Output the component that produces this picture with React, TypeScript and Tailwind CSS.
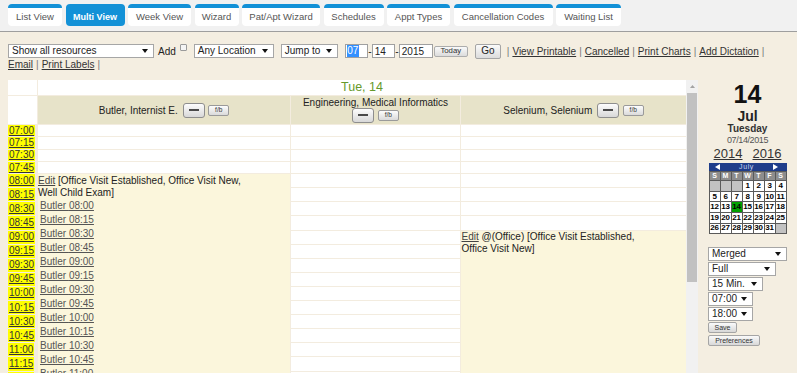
import React from "react";

function Tri() {
  return (
    <svg width="6" height="4" viewBox="0 0 6 4" className="shrink-0">
      <polygon points="0,0 6,0 3,4" fill="#111" />
    </svg>
  );
}

function Sel({ label, className }: { label: string; className: string }) {
  return (
    <div
      className={`flex items-center justify-between h-[14px] bg-white border border-[#a6a6a6] pl-[3px] pr-[5px] text-[10px] leading-none text-[#222] ${className}`}
    >
      <span>{label}</span>
      <Tri />
    </div>
  );
}

function DashBtn() {
  return (
    <div className="w-[22px] h-[15px] rounded-[3px] border border-[#8e8e8e] bg-linear-to-b from-[#fdfdfd] to-[#d8d8d8] flex items-center justify-center shrink-0">
      <div className="w-[10px] h-[2px] bg-[#4a4a4a]" />
    </div>
  );
}

function FbBtn() {
  return (
    <div className="w-[21px] h-[11px] rounded-[2px] border border-[#9a9a9a] bg-linear-to-b from-[#fdfdfd] to-[#dadada] flex items-center justify-center text-[6.5px] leading-none text-[#333] shrink-0">
      f/b
    </div>
  );
}

const tabs = [
  { label: "List View", w: "w-[54px]" },
  { label: "Multi View", w: "w-[59px]", active: true },
  { label: "Week View", w: "w-[63px]" },
  { label: "Wizard", w: "w-[44px]" },
  { label: "Pat/Apt Wizard", w: "w-[78px]" },
  { label: "Schedules", w: "w-[60px]" },
  { label: "Appt Types", w: "w-[63px]" },
  { label: "Cancellation Codes", w: "w-[99px]" },
  { label: "Waiting List", w: "w-[65px]" },
];

const times = [
  "07:00", "07:15", "07:30", "07:45",
  "08:00", "08:15", "08:30", "08:45",
  "09:00", "09:15", "09:30", "09:45",
  "10:00", "10:15", "10:30", "10:45",
  "11:00", "11:15", "11:30", "11:45",
];

const butlerLinks = [
  "08:00", "08:15", "08:30", "08:45", "09:00", "09:15", "09:30", "09:45",
  "10:00", "10:15", "10:30", "10:45", "11:00", "11:15", "11:30",
];

const weeks = [
  [0, 0, 0, 1, 2, 3, 4],
  [5, 6, 7, 8, 9, 10, 11],
  [12, 13, 14, 15, 16, 17, 18],
  [19, 20, 21, 22, 23, 24, 25],
  [26, 27, 28, 29, 30, 31, 0],
];

function rowH(i: number) {
  return i < 4 ? "h-[11.3px]" : "h-[13.1px]";
}

export default function App() {
  return (
    <div className="w-[797px] h-[373px] overflow-hidden bg-[#f4eee1] font-['Liberation_Sans',Arial,sans-serif] text-[#222]">
      {/* Tabs */}
      <div className="h-[32px] bg-[#f1f1f1] border-b border-[#9e9e9e] flex items-start gap-[3.5px] pl-[8px] pt-[4px]">
        {tabs.map((t) => (
          <div
            key={t.label}
            className={`${t.w} h-[22px] rounded-[4px] border-t-[4px] border-[#1391d7] flex items-center justify-center leading-none ${
              t.active
                ? "bg-[#1391d7] text-white font-bold text-[9px]"
                : "bg-white text-[#555] text-[9.5px]"
            }`}
          >
            {t.label}
          </div>
        ))}
      </div>

      {/* Toolbar */}
      <div className="pl-[8px] pt-[11px]">
        <div className="flex items-center h-[16px] text-[10px] text-[#222]">
          <Sel label="Show all resources" className="w-[146px]" />
          <span className="ml-[4px]">Add</span>
          <span className="ml-[4px] w-[7px] h-[7px] border border-[#9a9a9a] bg-[#f4f4f4] rounded-[1px] self-start mt-[1px]" />
          <Sel label="Any Location" className="w-[80px] ml-[7px]" />
          <Sel label="Jump to" className="w-[57px] ml-[7px]" />
          <div className="ml-[7px] w-[23px] h-[14px] bg-white border border-[#a0a0a0] flex items-center pl-[1px]">
            <span className="bg-[#3390ff] text-white leading-[12px] px-[0.5px]">07</span>
          </div>
          <span className="w-[4px] text-center">-</span>
          <div className="w-[23px] h-[14px] bg-white border border-[#a0a0a0] flex items-center pl-[2px]">
            14
          </div>
          <span className="w-[4px] text-center">-</span>
          <div className="w-[34px] h-[14px] bg-white border border-[#a0a0a0] flex items-center pl-[2px]">
            2015
          </div>
          <div className="ml-[1px] w-[34px] h-[11px] rounded-[2px] border border-[#adadad] bg-linear-to-b from-[#fafafa] to-[#dcdcdc] flex items-center justify-center text-[7.8px] leading-none text-[#333]">
            Today
          </div>
          <div className="ml-[7px] w-[26px] h-[15px] rounded-[2px] border border-[#a5a5a5] bg-linear-to-b from-[#fafafa] to-[#dcdcdc] flex items-center justify-center text-[10px] leading-none text-[#222]">
            Go
          </div>
          <span className="ml-[6px] text-[#777]">|</span>
          <span className="ml-[3px] underline text-[#333]">View Printable</span>
          <span className="ml-[3px] text-[#777]">|</span>
          <span className="ml-[3px] underline text-[#333]">Cancelled</span>
          <span className="ml-[3px] text-[#777]">|</span>
          <span className="ml-[3px] underline text-[#333]">Print Charts</span>
          <span className="ml-[3px] text-[#777]">|</span>
          <span className="ml-[3px] underline text-[#333]">Add Dictation</span>
          <span className="ml-[3px] text-[#777]">|</span>
        </div>
        <div className="flex items-center h-[12px] text-[10px] leading-none">
          <span className="underline text-[#333]">Email</span>
          <span className="ml-[3px] text-[#777]">|</span>
          <span className="ml-[3px] underline text-[#333]">Print Labels</span>
          <span className="ml-[3px] text-[#777]">|</span>
        </div>
      </div>

      {/* Main */}
      <div className="flex mt-[9px] h-[293px]">
        <div className="ml-[8px] flex h-full overflow-hidden">
          {/* Table */}
          <div className="w-[678px] flex flex-col gap-px bg-[#f3ecdf] self-start">
            <div className="flex gap-px h-[15px]">
              <div className="w-[29px] bg-white" />
              <div className="flex-1 bg-white flex items-center justify-center text-[12.5px] leading-none text-[#66992c]">
                Tue, 14
              </div>
            </div>
            <div className="flex gap-px">
              {/* time column */}
              <div className="w-[29px] flex flex-col gap-px">
                <div className="h-[28px] bg-white" />
                {times.map((t, i) => (
                  <div key={t} className={`${rowH(i)} flex`}>
                    <span className="h-full flex items-center bg-[#ffff00] pl-[1px] pr-[1px] text-[10px] leading-none underline text-[#333]">
                      {t}
                    </span>
                  </div>
                ))}
              </div>

              {/* Butler column */}
              <div className="w-[252px] flex flex-col gap-px">
                <div className="h-[28px] bg-[#e7e3c9] flex items-center justify-center text-[10px] text-[#222]">
                  <span>Butler, Internist E.</span>
                  <div className="ml-[5px]">
                    <DashBtn />
                  </div>
                  <div className="ml-[3.5px]">
                    <FbBtn />
                  </div>
                </div>
                {times.slice(0, 4).map((t) => (
                  <div key={t} className="h-[11.3px] bg-white" />
                ))}
                <div className="flex-1 bg-[#fbf6dc] pt-[1px] text-[10px]">
                  <div className="leading-[12px] text-[#222]">
                    <span className="underline text-[#444]">Edit</span> [Office Visit Established, Office Visit New,
                    <br />
                    Well Child Exam]
                  </div>
                  <div className="flex flex-col pl-[2px]">
                    {butlerLinks.map((b) => (
                      <div key={b} className="h-[14px] leading-[14px]">
                        <span className="underline text-[#555]">Butler {b}</span>
                      </div>
                    ))}
                  </div>
                </div>
              </div>

              {/* Engineering column */}
              <div className="w-[169px] flex flex-col gap-px">
                <div className="h-[28px] bg-[#e7e3c9] flex flex-col items-center text-[10px] text-[#222]">
                  <span className="leading-[11px] mt-[0.5px]">Engineering, Medical Informatics</span>
                  <div className="flex items-center gap-[3.5px]">
                    <DashBtn />
                    <FbBtn />
                  </div>
                </div>
                {times.map((t, i) => (
                  <div key={t} className={`${rowH(i)} bg-white`} />
                ))}
              </div>

              {/* Selenium column */}
              <div className="w-[225px] flex flex-col gap-px">
                <div className="h-[28px] bg-[#e7e3c9] flex items-center justify-center text-[10px] text-[#222]">
                  <span>Selenium, Selenium</span>
                  <div className="ml-[5px]">
                    <DashBtn />
                  </div>
                  <div className="ml-[3.5px]">
                    <FbBtn />
                  </div>
                </div>
                {times.slice(0, 8).map((t, i) => (
                  <div key={t} className={`${rowH(i)} bg-white`} />
                ))}
                <div className="flex-1 bg-[#fbf6dc] text-[10px] leading-[12.5px] pl-[0.5px] text-[#222]">
                  <span className="underline text-[#444]">Edit</span> @(Office) [Office Visit Established,
                  <br />
                  Office Visit New]
                </div>
              </div>
            </div>
          </div>

          {/* Scrollbar */}
          <div className="w-[12px] h-full bg-[#f1f1f1] flex flex-col items-center">
            <svg width="5" height="3" viewBox="0 0 5 3" className="mt-[5px]">
              <polygon points="0,3 5,3 2.5,0" fill="#a3a3a3" />
            </svg>
            <div className="mt-[5px] w-[10px] h-[189px] bg-[#c1c1c1]" />
          </div>
        </div>

        {/* Right panel */}
        <div className="flex-1 flex flex-col items-center pt-[2px]">
          <div className="text-[25px] font-bold leading-[25px] text-[#111]">14</div>
          <div className="mt-[1.6px] text-[14px] font-bold leading-[14px] text-[#222]">Jul</div>
          <div className="mt-[1.4px] text-[10px] font-bold leading-[10px] text-[#333]">Tuesday</div>
          <div className="mt-[1.7px] text-[9px] leading-[9px] text-[#555] tracking-[-0.4px]">07/14/2015</div>
          <div className="mt-[2.6px] flex gap-[10px] text-[13px] leading-[13px] text-[#333]">
            <span className="underline">2014</span>
            <span className="underline">2016</span>
          </div>

          {/* Mini calendar */}
          <div className="w-[78px] mt-[2.4px]">
            <div className="h-[8px] bg-[#1f3d8a] flex items-center justify-between pl-[6px] pr-[8px]">
              <svg width="5" height="6" viewBox="0 0 5 6">
                <polygon points="5,0 5,6 0,3" fill="#fff" />
              </svg>
              <span className="text-[7px] leading-none text-[#c9d3f0] tracking-[0.6px]">July</span>
              <svg width="5" height="6" viewBox="0 0 5 6">
                <polygon points="0,0 0,6 5,3" fill="#fff" />
              </svg>
            </div>
            <div className="grid grid-cols-7 gap-px p-px bg-[#5a5a5a]">
              {["S", "M", "T", "W", "T", "F", "S"].map((d, i) => (
                <div
                  key={i}
                  className="h-[8.5px] bg-[#8d8d8d] text-white text-[7px] font-bold flex items-center justify-center leading-none"
                >
                  {d}
                </div>
              ))}
              {weeks.flat().map((d, i) => (
                <div
                  key={i}
                  className={`h-[9.6px] flex items-center justify-center text-[8px] font-bold leading-none text-black tracking-[-0.3px] ${
                    d === 0 ? "bg-[#c2c2c2]" : d === 14 ? "bg-[#00a000]" : "bg-white"
                  }`}
                >
                  {d === 0 ? "" : d}
                </div>
              ))}
            </div>
          </div>

          {/* Selects */}
          <div className="self-start ml-[10px] mt-[12.5px] flex flex-col gap-px">
            <Sel label="Merged" className="w-[79px]" />
            <Sel label="Full" className="w-[68px]" />
            <Sel label="15 Min." className="w-[55px]" />
            <Sel label="07:00" className="w-[45px]" />
            <Sel label="18:00" className="w-[45px]" />
            <div className="w-[29px] h-[11px] rounded-[2px] border border-[#a5a5a5] bg-linear-to-b from-[#fafafa] to-[#d8d8d8] flex items-center justify-center text-[7px] leading-none text-[#333]">
              Save
            </div>
            <div className="mt-[1.5px] w-[52px] h-[11px] rounded-[2px] border border-[#a5a5a5] bg-linear-to-b from-[#fafafa] to-[#d8d8d8] flex items-center justify-center text-[7px] leading-none text-[#333]">
              Preferences
            </div>
          </div>
        </div>
      </div>
    </div>
  );
}
